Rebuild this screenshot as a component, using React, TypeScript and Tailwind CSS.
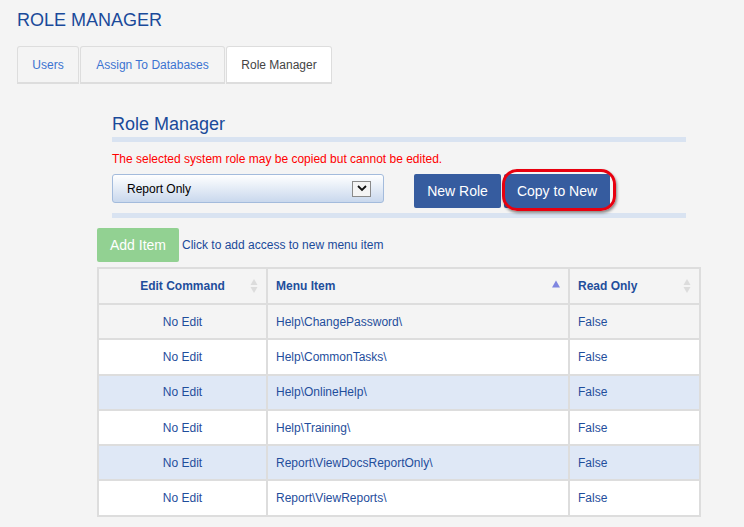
import React from 'react';

// Rows of the role's menu access table
const rows = [
  { cmd: 'No Edit', item: 'Help\\ChangePassword\\', ro: 'False', bg: 'bg-[#f4f4f4]' },
  { cmd: 'No Edit', item: 'Help\\CommonTasks\\', ro: 'False', bg: 'bg-white' },
  { cmd: 'No Edit', item: 'Help\\OnlineHelp\\', ro: 'False', bg: 'bg-[#dfe8f6]' },
  { cmd: 'No Edit', item: 'Help\\Training\\', ro: 'False', bg: 'bg-white' },
  { cmd: 'No Edit', item: 'Report\\ViewDocsReportOnly\\', ro: 'False', bg: 'bg-[#dfe8f6]' },
  { cmd: 'No Edit', item: 'Report\\ViewReports\\', ro: 'False', bg: 'bg-white' },
];

const SortBoth = () => (
  <svg width="8" height="16" viewBox="0 0 8 16" className="absolute right-[8px] top-1/2 -translate-y-1/2">
    <polygon points="4,1 7.5,7 0.5,7" fill="#dcdcdc" />
    <polygon points="4,15 7.5,9 0.5,9" fill="#dcdcdc" />
  </svg>
);

const SortUp = () => (
  <svg width="8" height="8" viewBox="0 0 8 8" className="absolute right-[8px] top-[11px]">
    <polygon points="4,0.5 8,7.5 0,7.5" fill="#7f86e0" />
  </svg>
);

export default function App() {
  return (
    <div
      className="min-h-screen bg-[#f4f4f4] pl-[17px] pt-[10px] text-[12px]"
      style={{ fontFamily: '"Liberation Sans", Arial, sans-serif' }}
    >
      <h1 className="text-[18px] leading-[20px] text-[#1a4a9a]">ROLE MANAGER</h1>

      {/* Tabs */}
      <div className="mt-[16px] flex gap-[1px]">
        <div className="flex h-[38px] w-[62px] items-center justify-center rounded-t-[3px] border border-b-2 border-[#dddddd] text-[#3b73d1]">
          Users
        </div>
        <div className="flex h-[38px] w-[145px] items-center justify-center rounded-t-[3px] border border-b-2 border-[#dddddd] text-[#3b73d1]">
          Assign To Databases
        </div>
        <div className="flex h-[38px] w-[106px] items-center justify-center rounded-t-[3px] border border-b-2 border-[#dddddd] bg-white text-[#444444]">
          Role Manager
        </div>
      </div>

      {/* Role manager section */}
      <div className="ml-[95px] mt-[30px] w-[574px]">
        <h2 className="text-[18px] leading-[20px] text-[#1a4a9a]">Role Manager</h2>
        <div className="mt-[3px] h-[5px] bg-[#d9e3f1]" />
        <p className="mt-[10px] leading-[14px] text-[#ff0000]">
          The selected system role may be copied but cannot be edited.
        </p>
        <div className="mt-[8px] flex items-start">
          <div className="flex h-[29px] w-[272px] items-center justify-between rounded-[3px] border border-[#a3bbdc] bg-gradient-to-b from-white to-[#c9d8ed] pl-[14px] pr-[12px] text-black">
            <span>Report Only</span>
            <span className="flex h-[16px] w-[19px] items-center justify-center border border-[#8a8a8a] bg-[#f4f4f4]">
              <svg width="10" height="7" viewBox="0 0 10 7">
                <path d="M1 1 L5 5 L9 1" stroke="#111" strokeWidth="1.8" fill="none" />
              </svg>
            </span>
          </div>
          <button className="ml-[30px] h-[34px] w-[87px] rounded-[2px] bg-[#365c9f] text-[14px] text-white">
            New Role
          </button>
          <div className="relative ml-[3px]">
            <button className="h-[34px] w-[106px] rounded-[2px] bg-[#365c9f] text-[14px] text-white">
              Copy to New
            </button>
            <div className="pointer-events-none absolute -left-[2px] -right-[6px] -top-[5px] -bottom-[3px] rounded-[15px] border-[3px] border-[#e8000f] shadow-[1px_2px_3px_rgba(0,0,0,0.45)]" />
          </div>
        </div>
        <div className="mt-[5px] h-[5px] bg-[#d9e3f1]" />
      </div>

      {/* Add item */}
      <div className="ml-[80px] mt-[10px] flex items-center">
        <button className="h-[34px] w-[82px] rounded-[2px] bg-[#92d192] text-[14px] text-white">Add Item</button>
        <span className="ml-[3px] text-[#1a4a9a]">Click to add access to new menu item</span>
      </div>

      {/* Table */}
      <table className="ml-[80px] mt-[5px] w-[604px] border-collapse border-2 border-[#dddddd] text-[#1f4e9c]">
        <thead>
          <tr className="bg-[#f4f4f4]">
            <th className="relative h-[36px] w-[169px] border-2 border-[#dddddd] text-center font-bold">
              Edit Command
              <SortBoth />
            </th>
            <th className="relative h-[36px] w-[302px] border-2 border-[#dddddd] pl-[8px] text-left font-bold">
              Menu Item
              <SortUp />
            </th>
            <th className="relative h-[36px] border-2 border-[#dddddd] pl-[8px] text-left font-bold">
              Read Only
              <SortBoth />
            </th>
          </tr>
        </thead>
        <tbody>
          {rows.map((r, i) => (
            <tr key={i} className={r.bg}>
              <td className="h-[35.3px] border-2 border-[#dddddd] text-center">{r.cmd}</td>
              <td className="h-[35.3px] border-2 border-[#dddddd] pl-[8px]">{r.item}</td>
              <td className="h-[35.3px] border-2 border-[#dddddd] pl-[8px]">{r.ro}</td>
            </tr>
          ))}
        </tbody>
      </table>
    </div>
  );
}
